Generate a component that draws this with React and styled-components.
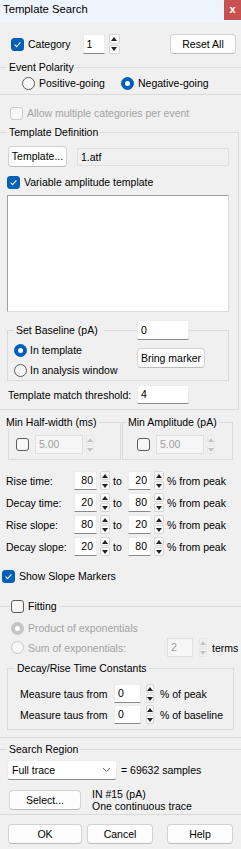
import styled, { createGlobalStyle } from 'styled-components';

const FONT = '"Liberation Sans", Arial, sans-serif';
const LINE = '#dadada';
const ACCENT = '#005fb8';

const GlobalStyle = createGlobalStyle`
  body {
    margin: 0;
    background: #f0f0f0;
  }
`;

const Window = styled.div`
  width: 241px;
  height: 849px;
  overflow: hidden;
  background: #f0f0f0;
  color: #000;
  font-family: ${FONT};
  font-size: 10.5px;
  line-height: 14px;
  white-space: nowrap;
  display: flex;
  flex-direction: column;
`;

const TitleBar = styled.div`
  height: 23px;
  flex: none;
  background: #eef4fb;
  display: flex;
  justify-content: space-between;
  align-items: flex-start;
`;

const Title = styled.span`
  padding: 1px 0 0 3px;
  font-size: 11.3px;
  line-height: 16px;
`;

const CloseButton = styled.span`
  width: 17px;
  height: 20px;
  background: #c75151;
  color: #fff;
  font: bold 11px/18px 'Liberation Sans', sans-serif;
  text-align: center;
`;

const Row = styled.div`
  display: flex;
  align-items: center;
  height: ${({ $h }) => $h || 14}px;
  margin-top: ${({ $mt }) => $mt || 0}px;
  padding-left: ${({ $pl }) => $pl || 0}px;
  padding-right: ${({ $pr }) => $pr || 0}px;
  gap: ${({ $gap }) => $gap || 0}px;
  flex: none;
`;

const GridRow = styled.div`
  display: grid;
  grid-template-columns: ${({ $cols }) => $cols};
  column-gap: ${({ $gap }) => $gap || 0}px;
  align-items: center;
  height: ${({ $h }) => $h || 19}px;
  margin-top: ${({ $mt }) => $mt || 0}px;
  padding-left: ${({ $pl }) => $pl || 0}px;
`;

const Group = styled.fieldset`
  margin: ${({ $mt }) => $mt || 0}px ${({ $mr }) => $mr || 0}px 0 ${({ $ml }) => $ml || 0}px;
  padding: 0 ${({ $pr }) => $pr || 0}px ${({ $pb }) => $pb || 0}px ${({ $pl }) => $pl || 0}px;
  min-width: 0;
  border: 1px solid ${LINE};
  ${({ $open }) => $open && 'border-left: none; border-right: none;'}
  ${({ $w }) => $w && `width: ${$w}px; box-sizing: border-box;`}
  flex: none;
`;

const Legend = styled.legend`
  padding: 0 ${({ $pr }) => $pr ?? 2}px 0 ${({ $pl }) => $pl ?? 2}px;
  margin-left: ${({ $ml }) => $ml || 0}px;
  line-height: 14px;
  display: flex;
  align-items: center;
  gap: 4px;
  ${({ $w }) => $w && `width: ${$w}px; box-sizing: border-box;`}
`;

const LegendLine = styled.span`
  flex: 1;
  height: 1px;
  background: ${LINE};
  margin: 0 0 0 2px;
`;

const Option = styled.span`
  display: flex;
  align-items: center;
  gap: ${({ $gap }) => $gap ?? 4}px;
  color: ${({ $disabled }) => ($disabled ? '#a3a3a3' : '#000')};
`;

const CheckBox = styled.span`
  flex: none;
  width: 13px;
  height: 13px;
  box-sizing: border-box;
  border-radius: 3px;
  display: inline-flex;
  align-items: center;
  justify-content: center;
  background: ${({ $checked }) => ($checked ? ACCENT : '#f7f7f7')};
  border: 1px solid
    ${({ $checked, $disabled }) => ($checked ? ACCENT : $disabled ? '#cacaca' : '#5c5c5c')};
`;

const RadioDot = styled.span`
  flex: none;
  width: 13px;
  height: 13px;
  box-sizing: border-box;
  border-radius: 50%;
  display: inline-flex;
  align-items: center;
  justify-content: center;
  background: ${({ $checked, $disabled }) =>
    $checked ? ($disabled ? '#c4c4c4' : ACCENT) : '#f7f7f7'};
  border: 1px solid
    ${({ $checked, $disabled }) =>
      $checked ? ($disabled ? '#c4c4c4' : ACCENT) : $disabled ? '#cacaca' : '#5c5c5c'};
  &::after {
    content: '';
    display: ${({ $checked }) => ($checked ? 'block' : 'none')};
    width: 5px;
    height: 5px;
    border-radius: 50%;
    background: #fff;
  }
`;

const Field = styled.div`
  flex: none;
  box-sizing: border-box;
  width: ${({ $w }) => $w}px;
  height: ${({ $h }) => $h || 19}px;
  line-height: ${({ $h }) => ($h || 19) - 2}px;
  padding: ${({ $right }) => ($right ? '0 3px 0 0' : '0 0 0 3px')};
  text-align: ${({ $right }) => ($right ? 'right' : 'left')};
  background: ${({ $disabled, $grey }) => ($disabled ? '#f6f6f6' : $grey ? '#f0f0f0' : '#fff')};
  color: ${({ $disabled }) => ($disabled ? '#9d9d9d' : '#000')};
  border: 1px solid ${({ $disabled, $grey }) => ($disabled || $grey ? '#e0e0e0' : '#ececec')};
  border-bottom-color: ${({ $disabled, $grey }) => ($disabled || $grey ? '#e0e0e0' : '#8a8a8a')};
  margin-left: ${({ $ml }) => $ml || 0}px;
`;

const Button = styled.div`
  flex: none;
  box-sizing: border-box;
  width: ${({ $w }) => $w}px;
  height: ${({ $h }) => $h || 20}px;
  line-height: ${({ $h }) => ($h || 20) - 2}px;
  text-align: center;
  background: #fdfdfd;
  border: 1px solid #d3d3d3;
  border-bottom-color: #bcbcbc;
  border-radius: 4px;
  margin-left: ${({ $ml }) => $ml || 0}px;
  margin-top: ${({ $mt }) => $mt || 0}px;
`;

const SpinBox = styled.div`
  flex: none;
  width: ${({ $w }) => $w}px;
  height: ${({ $h }) => $h}px;
  margin-left: ${({ $ml }) => $ml || 0}px;
  display: flex;
  flex-direction: column;
  gap: 1px;
`;

const SpinHalf = styled.div`
  flex: 1;
  display: flex;
  align-items: center;
  justify-content: center;
  background: ${({ $disabled }) => ($disabled ? '#f3f3f3' : '#fbfbfb')};
  border: 1px solid ${({ $disabled }) => ($disabled ? '#e6e6e6' : '#d6d6d6')};
  border-radius: 2px;
`;

const Arrow = styled.span`
  width: 0;
  height: 0;
  border-left: 3px solid transparent;
  border-right: 3px solid transparent;
  ${({ $up, $disabled }) =>
    $up
      ? `border-bottom: 4px solid ${$disabled ? '#c2c2c2' : '#222'};`
      : `border-top: 4px solid ${$disabled ? '#c2c2c2' : '#222'};`}
`;

const WhiteBox = styled.div`
  margin-top: 6px;
  height: 117px;
  box-sizing: border-box;
  background: #fff;
  border: 1px solid #dcdcdc;
  border-top-color: #a0a0a0;
  border-left-color: #a0a0a0;
`;

const BaselineBody = styled.div`
  display: grid;
  grid-template-columns: 123px auto;
  align-items: start;
  padding-top: 3px;
`;

const RadioColumn = styled.div`
  display: flex;
  flex-direction: column;
  gap: 6px;
`;

const MinGroups = styled.div`
  display: flex;
  gap: 1px;
  padding-left: 8px;
  margin-top: 5px;
`;

const SlopeRows = styled.div`
  display: flex;
  flex-direction: column;
  gap: 3px;
  margin-top: 11px;
`;

const Dropdown = styled.div`
  flex: none;
  box-sizing: border-box;
  width: 110px;
  height: 20px;
  padding: 0 5px 0 4px;
  display: flex;
  align-items: center;
  justify-content: space-between;
  background: #fff;
  border: 1px solid #ececec;
  border-bottom-color: #8a8a8a;
  border-radius: 3px;
`;

const InfoText = styled.div`
  margin-left: 11px;
  line-height: 12px;
`;

const Footer = styled.div`
  display: flex;
  margin-top: 9px;
  padding-left: 8px;
`;

const Check = ({ checked, disabled }) => (
  <CheckBox $checked={checked} $disabled={disabled}>
    {checked && (
      <svg width="9" height="9" viewBox="0 0 9 9">
        <path d="M1.6 4.7 L3.6 6.6 L7.4 2.4" stroke="#fff" strokeWidth="1.1" fill="none" />
      </svg>
    )}
  </CheckBox>
);

const Radio = ({ checked, disabled }) => <RadioDot $checked={checked} $disabled={disabled} />;

const Spin = ({ w = 10, h = 19, ml, disabled }) => (
  <SpinBox $w={w} $h={h} $ml={ml}>
    <SpinHalf $disabled={disabled}>
      <Arrow $up $disabled={disabled} />
    </SpinHalf>
    <SpinHalf $disabled={disabled}>
      <Arrow $disabled={disabled} />
    </SpinHalf>
  </SpinBox>
);

const slopeRows = [
  ['Rise time:', 80, 20],
  ['Decay time:', 20, 80],
  ['Rise slope:', 80, 20],
  ['Decay slope:', 20, 80],
];

const App = () => (
  <Window>
    <GlobalStyle />
    <TitleBar>
      <Title>Template Search</Title>
      <CloseButton>x</CloseButton>
    </TitleBar>

    <Row $h={20} $mt={11} $pl={11} $pr={5}>
      <Option>
        <Check checked />
        Category
      </Option>
      <Field $w={22} $h={20} $ml={12}>1</Field>
      <Spin w={11} h={20} ml={4} />
      <Button $w={66} style={{ marginLeft: 'auto' }}>Reset All</Button>
    </Row>

    <Group $open $mt={6} $pl={7} $pb={4}>
      <Legend>Event Polarity</Legend>
      <GridRow $cols="99px auto" $h={14} $mt={2} $pl={15}>
        <Option>
          <Radio />
          Positive-going
        </Option>
        <Option>
          <Radio checked />
          Negative-going
        </Option>
      </GridRow>
    </Group>

    <Row $mt={11} $pl={10}>
      <Option $disabled>
        <Check disabled />
        Allow multiple categories per event
      </Option>
    </Row>

    <Group $open $mt={5} $mr={2} $pl={7} $pr={9} $pb={5} style={{ borderRight: `1px solid ${LINE}` }}>
      <Legend>Template Definition</Legend>
      <Row $h={21} $mt={7}>
        <Button $w={59} $h={21} $ml={1}>Template...</Button>
        <Field $w={152} $h={18} $grey style={{ marginLeft: 'auto' }}>1.atf</Field>
      </Row>
      <Row $mt={8}>
        <Option>
          <Check checked />
          Variable amplitude template
        </Option>
      </Row>
      <WhiteBox />

      <Group $mt={8} $pl={6} $pb={3}>
        <Legend $w={175} $pr={0}>
          Set Baseline (pA)
          <LegendLine />
          <Field $w={52} $h={20} style={{ marginLeft: -4 }}>0</Field>
        </Legend>
        <BaselineBody>
          <RadioColumn>
            <Option $gap={3}>
              <Radio checked />
              In template
            </Option>
            <Option $gap={3}>
              <Radio />
              In analysis window
            </Option>
          </RadioColumn>
          <Button $w={68} $mt={5}>Bring marker</Button>
        </BaselineBody>
      </Group>

      <GridRow $cols="129px auto" $mt={4} $pl={1}>
        <span>Template match threshold:</span>
        <Field $w={52}>4</Field>
      </GridRow>
    </Group>

    <MinGroups>
      <Group $w={113} $pl={7} $pb={5}>
        <Legend $ml={-12}>Min Half-width (ms)</Legend>
        <Row $h={19} $mt={6} $gap={6}>
          <Check />
          <Field $w={48} $disabled>5.00</Field>
          <Spin w={8} ml={-3} disabled />
        </Row>
      </Group>
      <Group $w={111} $pl={7} $pb={5}>
        <Legend $ml={-4}>Min Amplitude (pA)</Legend>
        <Row $h={19} $mt={6} $gap={6} $pl={7}>
          <Check />
          <Field $w={48} $disabled>5.00</Field>
          <Spin w={8} ml={-3} disabled />
        </Row>
      </Group>
    </MinGroups>

    <SlopeRows>
      {slopeRows.map(([label, from, to]) => (
        <GridRow key={label} $cols="65px 23px 10px 12px 23px 10px auto" $gap={3} $pl={6}>
          <span>{label}</span>
          <Field $w={23} $right>{from}</Field>
          <Spin />
          <span>to</span>
          <Field $w={23} $right>{to}</Field>
          <Spin />
          <span>% from peak</span>
        </GridRow>
      ))}
    </SlopeRows>

    <Row $mt={13} $pl={2}>
      <Option>
        <Check checked />
        Show Slope Markers
      </Option>
    </Row>

    <Group $open $mt={16} $pl={7} $pr={7} $pb={7}>
      <Legend $ml={3} $pl={1} $pr={4}>
        <Check />
        Fitting
      </Legend>
      <Row $mt={8} $pl={4}>
        <Option $disabled>
          <Radio checked disabled />
          Product of exponentials
        </Option>
      </Row>
      <GridRow $cols="156px 26px 8px auto" $mt={3} $pl={4}>
        <Option $disabled>
          <Radio disabled />
          Sum of exponentials:
        </Option>
        <Field $w={26} $disabled>2</Field>
        <Spin w={8} ml={6} disabled />
        <span style={{ marginLeft: 11 }}>terms</span>
      </GridRow>

      <Group $mt={4} $pl={7} $pb={5}>
        <Legend>Decay/Rise Time Constants</Legend>
        {[['% of peak', 9], ['% of baseline', 2]].map(([unit, mt]) => (
          <GridRow key={unit} $cols="94px 27px 8px auto" $mt={mt} $pl={5}>
            <span>Measure taus from</span>
            <Field $w={27}>0</Field>
            <Spin w={8} ml={5} />
            <span style={{ marginLeft: 11 }}>{unit}</span>
          </GridRow>
        ))}
      </Group>
    </Group>

    <Group $open $mt={4} $pl={7} $pb={2}>
      <Legend>Search Region</Legend>
      <Row $h={20} $mt={4} $gap={4}>
        <Dropdown>
          Full trace
          <svg width="9" height="6" viewBox="0 0 9 6">
            <path d="M1 1 L4.5 4.5 L8 1" stroke="#666" strokeWidth="1" fill="none" />
          </svg>
        </Dropdown>
        <span>= 69632 samples</span>
      </Row>
      <Row $h={24} $mt={8} style={{ alignItems: 'flex-start' }}>
        <Button $w={72} $ml={2} $mt={2}>Select...</Button>
        <InfoText>
          IN #15 (pA)
          <br />
          One continuous trace
        </InfoText>
      </Row>
    </Group>

    <Footer>
      <Button $w={74}>OK</Button>
      <Button $w={66} $ml={5}>Cancel</Button>
      <Button $w={66} $ml={14}>Help</Button>
    </Footer>
  </Window>
);

export default App;
